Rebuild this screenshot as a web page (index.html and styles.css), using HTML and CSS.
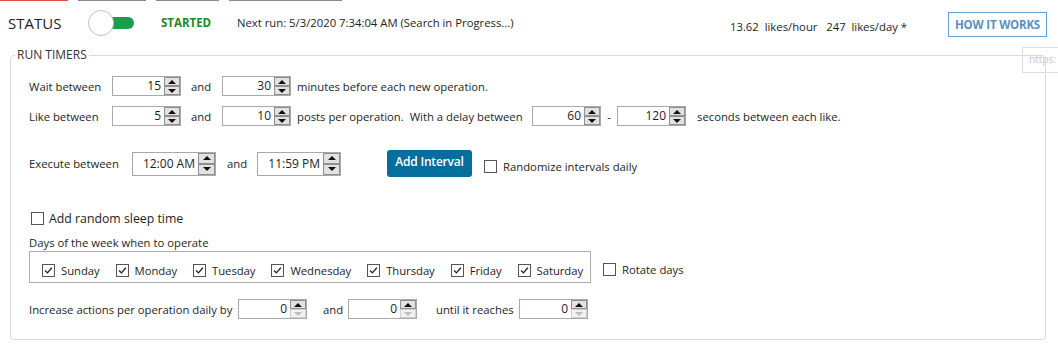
FILE: index.html
```html
<!DOCTYPE html>
<html lang="en">
<head>
  <meta charset="UTF-8">
  <title>Run Timers</title>
  <link rel="stylesheet" href="styles.css">
</head>
<body>
  <div class="tabs">
    <span class="tab tab-1 active"></span>
    <span class="tab tab-2"></span>
    <span class="tab tab-3"></span>
    <span class="tab tab-4"></span>
  </div>

  <header class="status-bar">
    <span class="status-label">STATUS</span>
    <span class="toggle">
      <svg width="47" height="26" viewBox="0 0 47 26">
        <rect x="12" y="7" width="34" height="12" rx="6" fill="#14a04c"/>
        <circle cx="13" cy="13" r="12.5" fill="#fff" stroke="#c4c4c4"/>
      </svg>
    </span>
    <span class="state">STARTED</span>
    <span class="next-run">Next run: 5/3/2020 7:34:04 AM (Search in Progress...)</span>
    <span class="stats">13.62&nbsp; likes/hour &nbsp; 247&nbsp; likes/day *</span>
    <a href="#" class="how">HOW IT WORKS</a>
  </header>

  <div class="tip">https:</div>

  <fieldset class="timers">
    <legend>RUN TIMERS</legend>
    <div class="timers-body">

      <div class="row row-wait">
        <span class="lbl lbl-wait">Wait between</span>
        <span class="spin"><span class="val">15</span><span class="btns"><i class="up"></i><i class="dn"></i></span></span>
        <span class="and">and</span>
        <span class="spin"><span class="val">30</span><span class="btns"><i class="up"></i><i class="dn"></i></span></span>
        <span class="after">minutes before each new operation.</span>
      </div>

      <div class="row row-like">
        <span class="lbl lbl-wait">Like between</span>
        <span class="spin"><span class="val">5</span><span class="btns"><i class="up"></i><i class="dn"></i></span></span>
        <span class="and">and</span>
        <span class="spin"><span class="val">10</span><span class="btns"><i class="up"></i><i class="dn"></i></span></span>
        <span class="after posts">posts per operation.&nbsp; With a delay between</span>
        <span class="spin"><span class="val">60</span><span class="btns"><i class="up"></i><i class="dn"></i></span></span>
        <span class="dash">-</span>
        <span class="spin"><span class="val">120</span><span class="btns"><i class="up"></i><i class="dn"></i></span></span>
        <span class="secs">seconds between each like.</span>
      </div>

      <div class="row row-exec">
        <span class="lbl lbl-exec">Execute between</span>
        <span class="spin spin-time"><span class="val">12:00 AM</span><span class="btns"><i class="up"></i><i class="dn"></i></span></span>
        <span class="and and-time">and</span>
        <span class="spin spin-time"><span class="val">11:59 PM</span><span class="btns"><i class="up"></i><i class="dn"></i></span></span>
        <button class="add-interval">Add Interval</button>
        <label class="check check-random"><span class="cb"></span>Randomize intervals daily</label>
      </div>

      <div class="row row-sleep">
        <label class="check check-sleep"><span class="cb"></span>Add random sleep time</label>
      </div>

      <div class="days-title">Days of the week when to operate</div>
      <div class="row row-days">
        <div class="days">
          <label class="check day"><span class="cb on"><svg viewBox="0 0 13 13"><path d="M2.5 6.5 5.2 9.3 10.5 3.2"/></svg></span>Sunday</label>
          <label class="check day"><span class="cb on"><svg viewBox="0 0 13 13"><path d="M2.5 6.5 5.2 9.3 10.5 3.2"/></svg></span>Monday</label>
          <label class="check day"><span class="cb on"><svg viewBox="0 0 13 13"><path d="M2.5 6.5 5.2 9.3 10.5 3.2"/></svg></span>Tuesday</label>
          <label class="check day"><span class="cb on"><svg viewBox="0 0 13 13"><path d="M2.5 6.5 5.2 9.3 10.5 3.2"/></svg></span>Wednesday</label>
          <label class="check day"><span class="cb on"><svg viewBox="0 0 13 13"><path d="M2.5 6.5 5.2 9.3 10.5 3.2"/></svg></span>Thursday</label>
          <label class="check day"><span class="cb on"><svg viewBox="0 0 13 13"><path d="M2.5 6.5 5.2 9.3 10.5 3.2"/></svg></span>Friday</label>
          <label class="check day"><span class="cb on"><svg viewBox="0 0 13 13"><path d="M2.5 6.5 5.2 9.3 10.5 3.2"/></svg></span>Saturday</label>
        </div>
        <label class="check check-rotate"><span class="cb"></span>Rotate days</label>
      </div>

      <div class="row row-increase">
        <span class="lbl lbl-inc">Increase actions per operation daily by</span>
        <span class="spin"><span class="val">0</span><span class="btns"><i class="up"></i><i class="dn off"></i></span></span>
        <span class="and and-inc">and</span>
        <span class="spin"><span class="val">0</span><span class="btns"><i class="up"></i><i class="dn off"></i></span></span>
        <span class="until">until it reaches</span>
        <span class="spin"><span class="val">0</span><span class="btns"><i class="up"></i><i class="dn off"></i></span></span>
      </div>

    </div>
  </fieldset>
</body>
</html>
```

FILE: styles.css
```css
body {
  margin: 0;
  font-family: 'Open Sans', 'Noto Sans', sans-serif;
  font-size: 11.3px;
  color: #1e1e1e;
  background: #fff;
  overflow: hidden;
  position: relative;
}
.tabs {
  display: flex;
  gap: 10px;
  height: 1px;
}
.tab {
  background: #8a8a8a;
}
.tab.active {
  background: #e24a4a;
}
.tab-1 { width: 68px; }
.tab-2 { width: 68px; }
.tab-3 { width: 63px; }
.tab-4 { width: 113px; }

.status-bar {
  display: flex;
  align-items: center;
  height: 47px;
  padding: 0 11px 0 8px;
}
.status-label {
  width: 80px;
  font-size: 15px;
  margin-bottom: 4px;
}
.toggle {
  width: 73px;
  height: 26px;
  margin-bottom: 3px;
}
.state {
  width: 76px;
  color: #208a24;
  font-weight: bold;
  font-size: 11.5px;
  margin-bottom: 4px;
}
.next-run {
  margin-bottom: 4px;
}
.stats {
  margin-left: auto;
  margin-top: 3px;
}
.how {
  margin-left: 41px;
  border: 1px solid #5ea2d6;
  color: #5a90c2;
  font-weight: bold;
  text-decoration: none;
  font-size: 11.5px;
  letter-spacing: -0.2px;
  padding: 0 6px;
  height: 25px;
  line-height: 23px;
  width: 99px;
  box-sizing: border-box;
  text-align: center;
}
.tip {
  position: absolute;
  top: 47px;
  left: 1022px;
  right: 0;
  height: 26px;
  box-sizing: border-box;
  border: 1px solid #dcdcdc;
  border-right: none;
  color: #c9c9c9;
  font-size: 10.5px;
  letter-spacing: -0.2px;
  padding: 4px 0 0 6px;
  white-space: nowrap;
  z-index: 2;
}

.timers {
  margin: 0 12px 0 10px;
  padding: 0;
  border: 1px solid #d3dee6;
  border-radius: 4px;
  min-width: 0;
}
.timers legend {
  margin-left: 4px;
  padding: 0 2px;
  line-height: 14px;
  font-size: 12px;
  color: #333;
}
.timers-body {
  padding: 14px 0 20px 18px;
}
.row {
  display: flex;
  align-items: center;
}
.row-wait { height: 20px; }
.row-like { height: 20px; margin-top: 10px; }
.row-exec { height: 27px; margin-top: 24px; }
.row-sleep { height: 16px; margin-top: 33px; }
.row-days { height: 32px; }
.row-increase { height: 20px; margin-top: 16px; }

.lbl-wait { width: 83px; }
.lbl-exec { width: 103px; }
.lbl-inc { width: 209px; }
.and { width: 31px; padding-left: 10px; }
.and-time { width: 30px; padding-left: 11px; }
.and-inc { width: 25px; padding-left: 16px; }
.until { width: 83px; padding-left: 19px; }
.after { padding-left: 6px; }
.posts { width: 241px; box-sizing: border-box; }
.dash { width: 16px; text-align: center; }
.secs { padding-left: 11px; }

.spin {
  display: flex;
  width: 69px;
  height: 20px;
  box-sizing: border-box;
  border: 1px solid #a9a9a9;
  background: #fff;
}
.spin .val {
  flex: 1;
  text-align: right;
  padding-right: 3px;
  line-height: 18px;
  font-size: 12px;
}
.btns {
  width: 16px;
  display: flex;
  flex-direction: column;
}
.btns i {
  flex: 1;
  display: flex;
  align-items: center;
  justify-content: center;
  background: #e2e2e2;
  border: 1px solid #8f8f8f;
}
.btns i::after {
  content: "";
  border-left: 4px solid transparent;
  border-right: 4px solid transparent;
}
.btns i.up::after {
  border-bottom: 4px solid #111;
}
.btns i.dn::after {
  border-top: 4px solid #111;
}
.btns i.off {
  background: #f1f1f1;
  border-color: #cfcfcf;
}
.btns i.off::after {
  border-top-color: #bdbdbd;
}
.spin-time {
  width: 84px;
  height: 24px;
}
.spin-time .val {
  line-height: 22px;
}
.spin-time .btns {
  width: 17px;
}

.add-interval {
  margin-left: 46px;
  width: 85px;
  height: 27px;
  border: none;
  border-radius: 3px;
  background: #046e9c;
  color: #fff;
  font-family: inherit;
  font-size: 12px;
  font-weight: 600;
  letter-spacing: -0.2px;
  padding: 0 0 4px;
  cursor: pointer;
}
.check {
  display: flex;
  align-items: center;
}
.cb {
  width: 13px;
  height: 13px;
  box-sizing: border-box;
  border: 1px solid #555;
  background: #fff;
  margin-right: 6px;
}
.cb svg {
  display: block;
  width: 11px;
  height: 11px;
}
.cb path {
  fill: none;
  stroke: #222;
  stroke-width: 1.6;
}
.check-random {
  margin-left: 12px;
  margin-top: 6px;
}
.check-sleep {
  margin-left: 2px;
  font-size: 12.3px;
}
.check-sleep .cb {
  margin-right: 5px;
}
.days-title {
  margin-top: 9px;
  height: 16px;
  line-height: 16px;
}
.days {
  width: 562px;
  height: 32px;
  box-sizing: border-box;
  border: 1px solid #adadad;
  display: flex;
  align-items: center;
  padding: 6px 0 0 12px;
}
.day {
  margin-right: 16px;
  letter-spacing: -0.05px;
}
.check-rotate {
  margin-left: 12px;
  margin-top: 4px;
}
```
